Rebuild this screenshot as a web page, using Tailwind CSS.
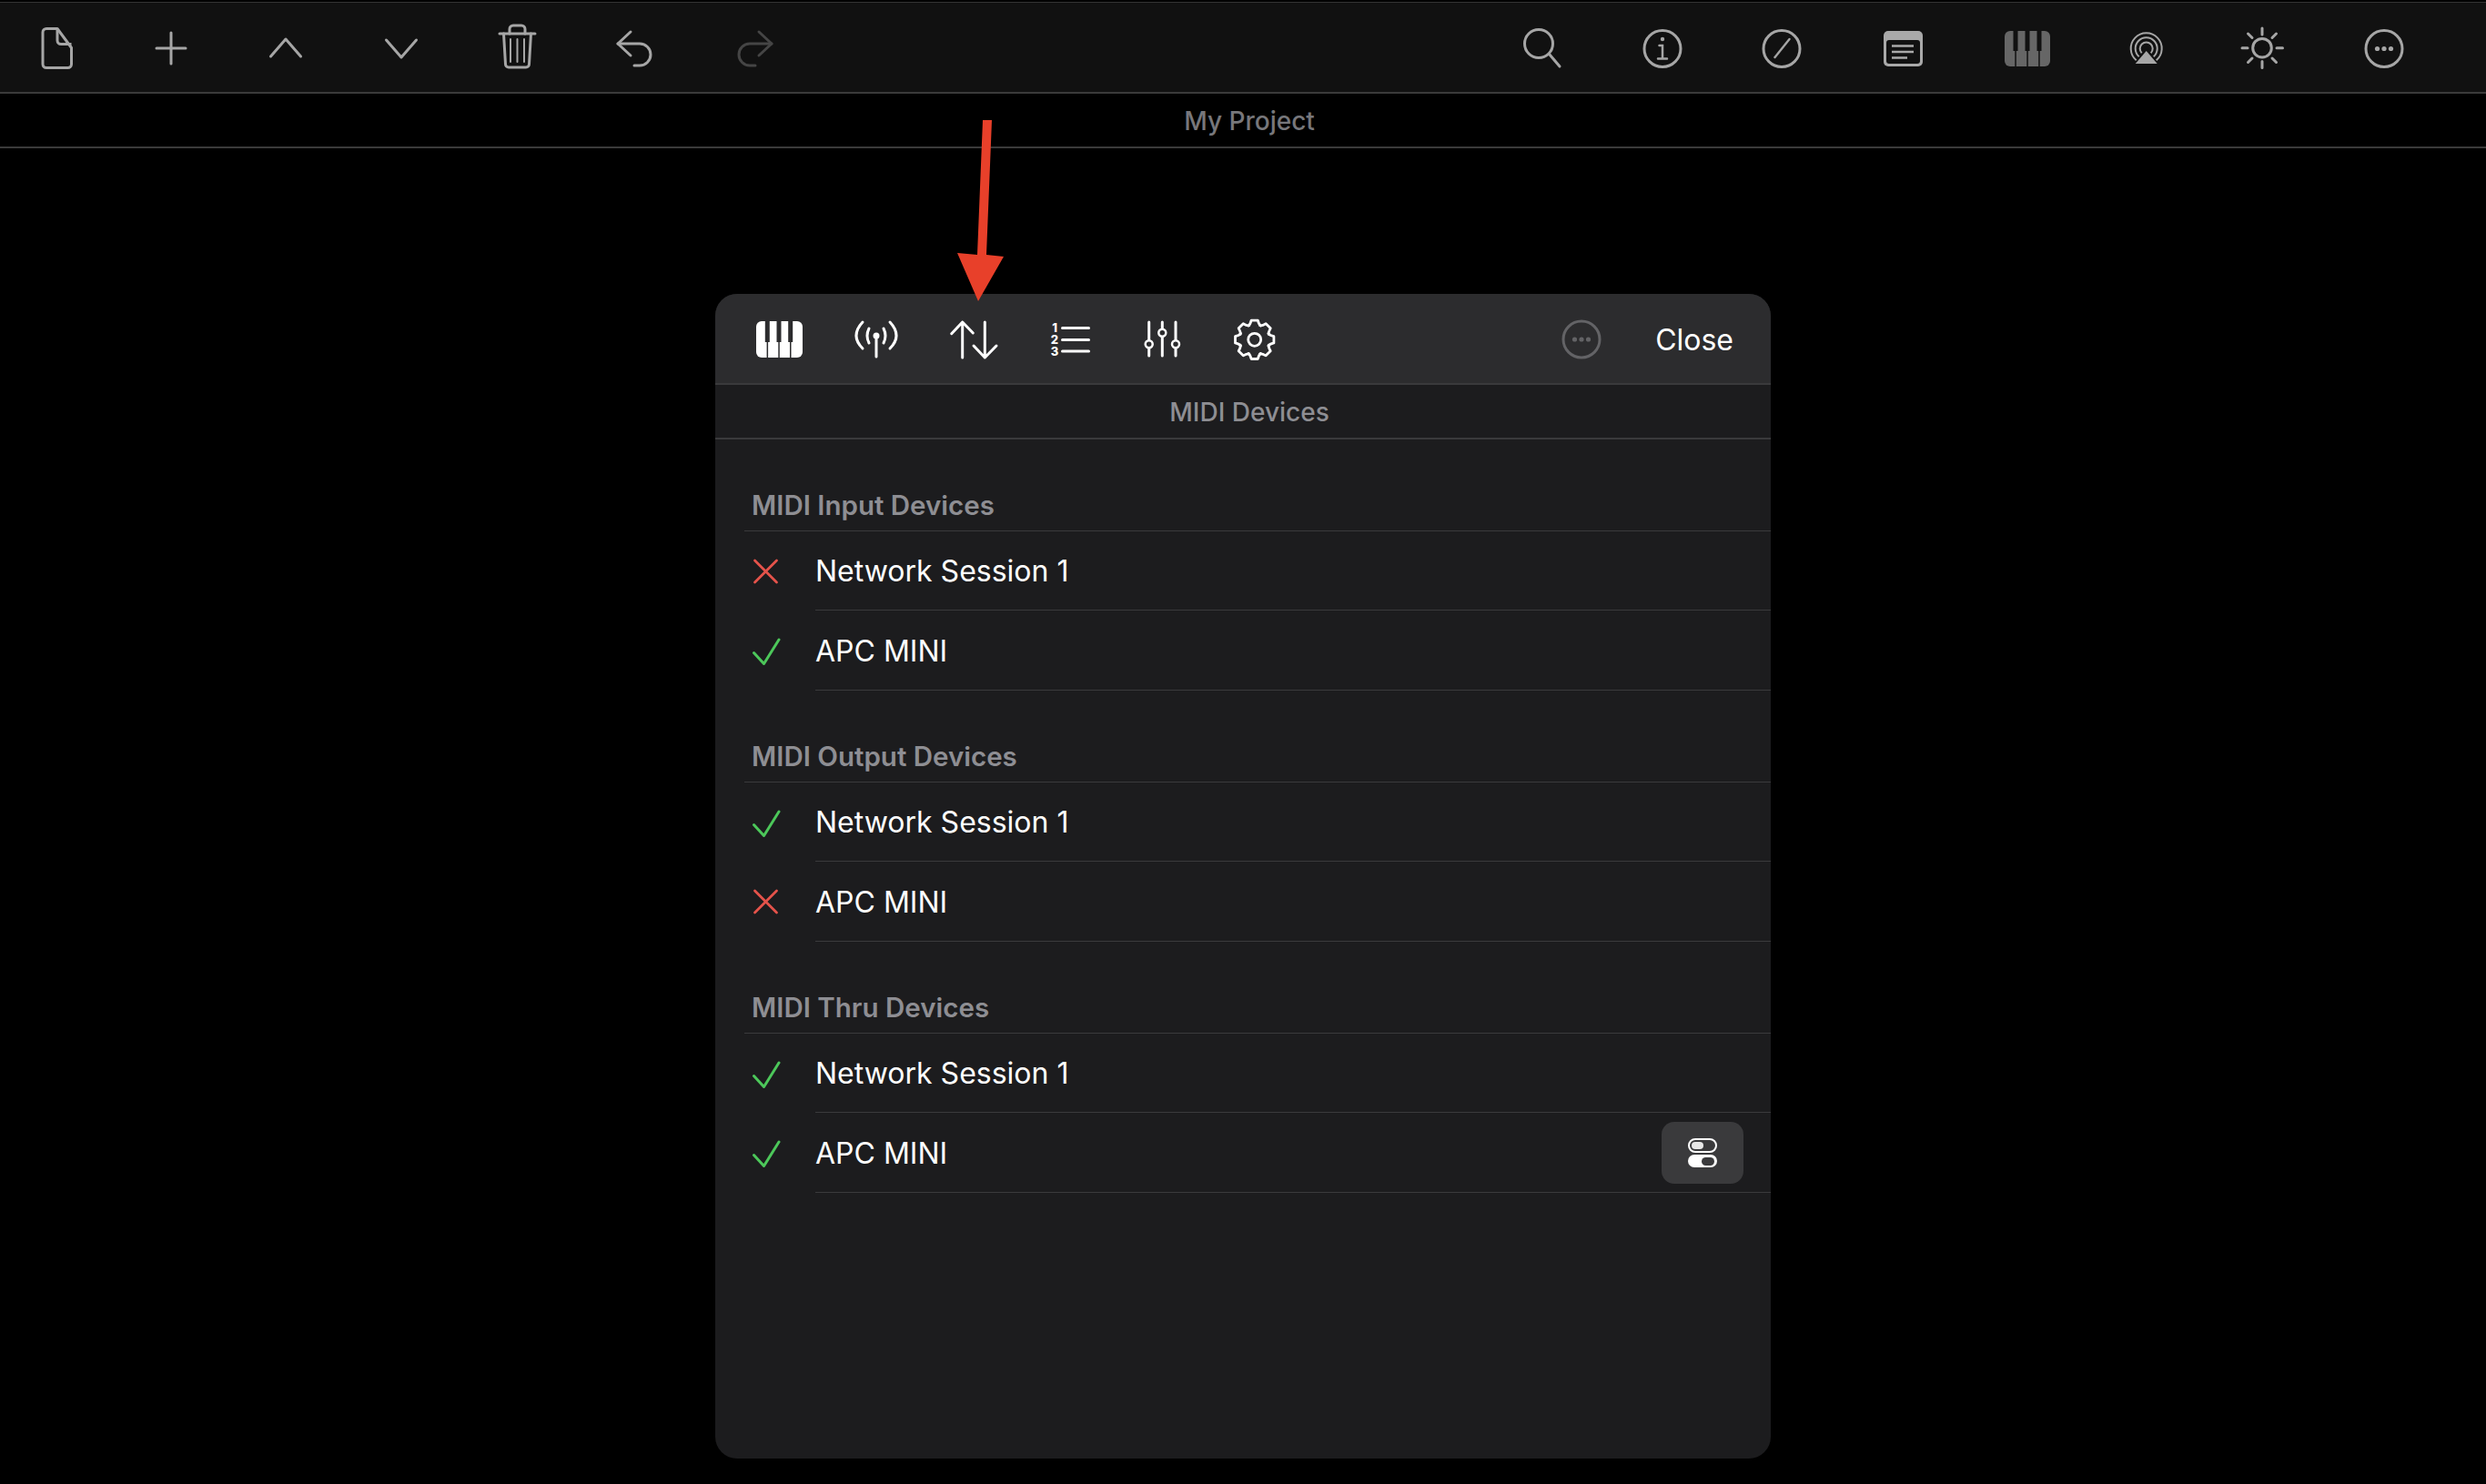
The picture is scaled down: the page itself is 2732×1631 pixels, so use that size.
<!DOCTYPE html>
<html lang="en">
<head>
<meta charset="UTF-8" />
<title>MIDI Devices</title>
<script src="https://cdn.jsdelivr.net/npm/@tailwindcss/browser@4"></script>
</head>
<body class="bg-black [font-family:Inter,sans-serif]">
<div class="relative w-[2732px] h-[1631px] overflow-hidden bg-black">

  <!-- main toolbar -->
  <div class="mt-[2px] h-[101px] flex items-center pb-[1px] bg-[#111111] border-t border-t-[#333333] border-b-2 border-b-[#3a3a3a]">
    <div class="flex items-center ml-[30px] text-[#a6a6a6]">
      <svg class="w-[64px] h-[64px]" viewBox="0 0 64 64" fill="none" stroke="currentColor" stroke-width="3" stroke-linejoin="round"><path d="M21 11.5h12l15.5 21v18a4 4 0 0 1-4 4h-23.5a4 4 0 0 1-4-4v-35a4 4 0 0 1 4-4z"/><path d="M33 11.5v13a4 4 0 0 0 4 4h11.5"/></svg>
      <svg class="w-[64px] h-[64px] ml-[62px]" viewBox="0 0 64 64" fill="none" stroke="currentColor" stroke-width="3" stroke-linecap="round"><path d="M32 16v34M16 33h32"/></svg>
      <svg class="w-[64px] h-[64px] ml-[62px]" viewBox="0 0 64 64" fill="none" stroke="currentColor" stroke-width="3" stroke-linecap="round" stroke-linejoin="round"><path d="M15.5 42L32 23l16.5 19"/></svg>
      <svg class="w-[64px] h-[64px] ml-[63px]" viewBox="0 0 64 64" fill="none" stroke="currentColor" stroke-width="3" stroke-linecap="round" stroke-linejoin="round"><path d="M15.5 24L32 43l16.5-19"/></svg>
      <svg class="w-[64px] h-[64px] ml-[63px]" viewBox="0 0 64 64" fill="none" stroke="currentColor" stroke-width="3" stroke-linecap="round" stroke-linejoin="round"><path d="M13 17h39"/><path d="M24 17v-5a4 4 0 0 1 4-4h9a4 4 0 0 1 4 4v5"/><path d="M17.5 17l2 33.5a3.5 3.5 0 0 0 3.5 3.5h19a3.5 3.5 0 0 0 3.5-3.5l2-33.5"/><path stroke-width="2" d="M25 23v25M32.5 23v25M40 23v25"/></svg>
      <svg class="w-[64px] h-[64px] ml-[66px]" viewBox="0 0 64 64" fill="none" stroke="currentColor" stroke-width="3" stroke-linecap="round" stroke-linejoin="round"><path d="M27 15L13 28l14 13"/><path d="M13 28h24a12 12 0 0 1 0 24h-6"/></svg>
      <svg class="w-[64px] h-[64px] ml-[67px] text-[#454545]" viewBox="0 0 64 64" fill="none" stroke="currentColor" stroke-width="3" stroke-linecap="round" stroke-linejoin="round"><path d="M37 15l14 13-14 13"/><path d="M51 28H27a12 12 0 0 0 0 24h6"/></svg>
    </div>
    <div class="flex items-center ml-auto mr-[80px] text-[#a6a6a6]">
      <svg class="w-[64px] h-[64px]" viewBox="0 0 64 64" fill="none" stroke="currentColor" stroke-width="3" stroke-linecap="round"><circle cx="29" cy="28" r="15.5"/><path d="M41 40l11 13"/></svg>
      <svg class="w-[64px] h-[64px] ml-[69px]" viewBox="0 0 64 64" fill="none" stroke="currentColor" stroke-width="3" stroke-linecap="round"><circle cx="32" cy="33.5" r="20"/><circle cx="32" cy="23" r="2.2" fill="currentColor" stroke="none"/><path stroke-width="2.5" d="M28.5 30h3.5v14.5M27 44.5h10"/></svg>
      <svg class="w-[64px] h-[64px] ml-[67px]" viewBox="0 0 64 64" fill="none" stroke="currentColor" stroke-width="3" stroke-linecap="round"><circle cx="32" cy="33.5" r="20"/><path stroke-width="2.4" d="M24.5 43l16-20"/></svg>
      <svg class="w-[64px] h-[64px] ml-[69px]" viewBox="0 0 64 64" fill="none"><rect x="11" y="14" width="43" height="39" rx="5" fill="#a9a9a9"/><rect x="14" y="24" width="37" height="26" rx="3" fill="#111111"/><path stroke="#a9a9a9" stroke-width="2.5" d="M20 30.5h24M20 37h24M20 43.5h17"/></svg>
      <svg class="w-[64px] h-[64px] ml-[73px]" viewBox="0 0 64 64"><g transform="translate(7 14)"><rect width="50" height="39" rx="6" fill="#666666"/><path fill="#111111" d="M9.5 0h5v22h-5zM22.5 0h5v22h-5zM35.5 0h5v22h-5zM11.3 22h1.5v17h-1.5zM24.3 22h1.5v17h-1.5zM37.2 22h1.5v17h-1.5z"/></g></svg>
      <svg class="w-[64px] h-[64px] ml-[68px]" viewBox="0 0 64 64" fill="none" stroke="currentColor" stroke-width="2"><path d="M19.7 46.3A17 17 0 1 1 41.7 46.3"/><path d="M22.7 42.3A12 12 0 1 1 38.7 42.3"/><path d="M25.7 38.3A7 7 0 1 1 35.7 38.3"/><path fill="currentColor" stroke="none" d="M30.7 36L42.7 50H18.7z"/></svg>
      <svg class="w-[64px] h-[64px] ml-[61px]" viewBox="0 0 64 64" fill="none" stroke="currentColor" stroke-width="3" stroke-linecap="round"><circle cx="33" cy="32.7" r="10.3"/><path d="M33 11v7M33 47.5v7M11 32.7h6M49 32.7h6.5M17.5 17l4.5 4.5M44 44l4.5 4.5M17.5 48.5l4.5-4.5M44 21.5l4.5-4.5"/></svg>
      <svg class="w-[64px] h-[64px] ml-[71px]" viewBox="0 0 64 64" fill="none" stroke="currentColor" stroke-width="3"><circle cx="32" cy="33.5" r="20"/><g fill="currentColor" stroke="none"><circle cx="24.5" cy="33.5" r="2.6"/><circle cx="32" cy="33.5" r="2.6"/><circle cx="39.5" cy="33.5" r="2.6"/></g></svg>
    </div>
  </div>

  <!-- project title -->
  <div class="h-[60px] flex items-center justify-center pl-[14px] pt-[2px] bg-black border-b-2 border-b-[#3a3a3a]">
    <span class="text-[28px] font-medium text-[#77777b]">My Project</span>
  </div>

  <!-- midi panel -->
  <div class="mt-[160px] mx-auto w-[1160px] h-[1280px] rounded-[24px] overflow-hidden bg-[#1c1c1e]">
    <div class="h-[100px] flex items-center pl-[38px] pr-[41px] bg-[#2c2c2e] border-b-2 border-b-[#3a3a3c] text-white">
      <svg class="w-[64px] h-[64px]" viewBox="0 0 64 64"><g transform="translate(7 13)"><rect width="51" height="40" rx="6" fill="#ffffff"/><path fill="#2c2c2e" d="M9.8 0h5v23h-5zM22.5 0h5v23h-5zM35.2 0h5v23h-5zM11.6 23h1.5v17h-1.5zM24.3 23h1.5v17h-1.5zM37 23h1.5v17h-1.5z"/></g></svg>
      <svg class="w-[64px] h-[64px] ml-[43px]" viewBox="0 0 64 64" fill="none" stroke="currentColor" stroke-width="3" stroke-linecap="round"><path d="M17 14Q3 29 17 43M47 14Q61 29 47 43M24 21Q20 29 24 37M40 21Q44 29 40 37M32 30v22"/><circle cx="32" cy="29" r="3.5" fill="currentColor" stroke="none"/></svg>
      <svg class="w-[64px] h-[64px] ml-[43px]" viewBox="0 0 64 64" fill="none" stroke="currentColor" stroke-width="3" stroke-linecap="round" stroke-linejoin="round"><path d="M19.7 14v39M7.7 26.7L19.7 14l11.6 12M44.3 14v39M32 40l12.3 13L57 40"/></svg>
      <svg class="w-[64px] h-[64px] ml-[42px]" viewBox="0 0 64 64" fill="none" stroke="currentColor" stroke-width="3" stroke-linecap="round"><path d="M23.5 20.5h29M23.5 33.5h29M23.5 46h29"/><g fill="currentColor" stroke="none" font-size="13" font-weight="800" text-anchor="middle"><text x="15" y="25">1</text><text x="15" y="38">2</text><text x="15" y="51">3</text></g></svg>
      <svg class="w-[64px] h-[64px] ml-[37px]" viewBox="0 0 64 64" fill="none" stroke="currentColor" stroke-width="3" stroke-linecap="round"><path d="M17.7 14v37M32.3 14v37M47 14v37"/><g fill="#2c2c2e" stroke-width="2.5"><circle cx="17.7" cy="38.3" r="4"/><circle cx="32.3" cy="25.7" r="4"/><circle cx="47" cy="38.3" r="4"/></g></svg>
      <svg class="w-[64px] h-[64px] ml-[38px]" viewBox="0 0 64 64" fill="none" stroke="currentColor" stroke-width="2.8" stroke-linecap="round" stroke-linejoin="round"><g transform="translate(31.7 33.3)"><circle r="7"/><path d="M-6.8-15.2Q-4.8-16.5-3.6-21.2L3.6-21.2Q4.8-16.5 6.8-15.2"/><path transform="rotate(45)" d="M-6.8-15.2Q-4.8-16.5-3.6-21.2L3.6-21.2Q4.8-16.5 6.8-15.2"/><path transform="rotate(90)" d="M-6.8-15.2Q-4.8-16.5-3.6-21.2L3.6-21.2Q4.8-16.5 6.8-15.2"/><path transform="rotate(135)" d="M-6.8-15.2Q-4.8-16.5-3.6-21.2L3.6-21.2Q4.8-16.5 6.8-15.2"/><path transform="rotate(180)" d="M-6.8-15.2Q-4.8-16.5-3.6-21.2L3.6-21.2Q4.8-16.5 6.8-15.2"/><path transform="rotate(225)" d="M-6.8-15.2Q-4.8-16.5-3.6-21.2L3.6-21.2Q4.8-16.5 6.8-15.2"/><path transform="rotate(270)" d="M-6.8-15.2Q-4.8-16.5-3.6-21.2L3.6-21.2Q4.8-16.5 6.8-15.2"/><path transform="rotate(315)" d="M-6.8-15.2Q-4.8-16.5-3.6-21.2L3.6-21.2Q4.8-16.5 6.8-15.2"/></g></svg>
      <svg class="w-[64px] h-[64px] ml-auto mr-[49px]" viewBox="0 0 64 64" fill="none" stroke="#636366" stroke-width="3"><circle cx="32" cy="33" r="20"/><g fill="#636366" stroke="none"><circle cx="24.5" cy="33" r="2.6"/><circle cx="32" cy="33" r="2.6"/><circle cx="39.5" cy="33" r="2.6"/></g></svg>
      <span class="text-[32px] leading-none pt-[3px]">Close</span>
    </div>
    <div class="h-[60px] flex items-center justify-center pl-[14px] pt-[2px] border-b-2 border-b-[#3a3a3c]">
      <span class="text-[28px] font-medium text-[#8e8e93]">MIDI Devices</span>
    </div>

    <!-- input -->
    <div class="h-[101px] ml-[32px] pl-[8px] pb-[10px] flex items-end border-b border-b-[#3a3a3c]"><span class="text-[29.5px] leading-[36px] font-semibold text-[#8e8e93]">MIDI Input Devices</span></div>
    <div class="h-[87px] flex items-center">
      <div class="w-[110px] pl-[40px]"><svg class="w-[32px] h-[32px]" viewBox="0 0 32 32" fill="none" stroke="#e5534b" stroke-width="2.8" stroke-linecap="round"><path d="M3.5 4l24 24M27.5 4l-24 24"/></svg></div>
      <div class="flex-1 h-full flex items-center border-b border-b-[#3a3a3c] text-[32px] text-white"><span class="pt-[1px]">Network Session 1</span></div>
    </div>
    <div class="h-[88px] flex items-center">
      <div class="w-[110px] pl-[40px]"><svg class="w-[32px] h-[32px]" viewBox="0 0 32 32" fill="none" stroke="#4cc75a" stroke-width="3" stroke-linecap="round" stroke-linejoin="round"><path d="M2.5 18.5l11 12L30 4"/></svg></div>
      <div class="flex-1 h-full flex items-center border-b border-b-[#3a3a3c] text-[32px] text-white"><span class="pt-[2px]">APC MINI</span></div>
    </div>

    <!-- output -->
    <div class="h-[101px] ml-[32px] pl-[8px] pb-[10px] flex items-end border-b border-b-[#3a3a3c]"><span class="text-[29.5px] leading-[36px] font-semibold text-[#8e8e93]">MIDI Output Devices</span></div>
    <div class="h-[87px] flex items-center">
      <div class="w-[110px] pl-[40px]"><svg class="w-[32px] h-[32px]" viewBox="0 0 32 32" fill="none" stroke="#4cc75a" stroke-width="3" stroke-linecap="round" stroke-linejoin="round"><path d="M2.5 18.5l11 12L30 4"/></svg></div>
      <div class="flex-1 h-full flex items-center border-b border-b-[#3a3a3c] text-[32px] text-white"><span class="pt-[1px]">Network Session 1</span></div>
    </div>
    <div class="h-[88px] flex items-center">
      <div class="w-[110px] pl-[40px]"><svg class="w-[32px] h-[32px]" viewBox="0 0 32 32" fill="none" stroke="#e5534b" stroke-width="2.8" stroke-linecap="round"><path d="M3.5 4l24 24M27.5 4l-24 24"/></svg></div>
      <div class="flex-1 h-full flex items-center border-b border-b-[#3a3a3c] text-[32px] text-white"><span class="pt-[2px]">APC MINI</span></div>
    </div>

    <!-- thru -->
    <div class="h-[101px] ml-[32px] pl-[8px] pb-[10px] flex items-end border-b border-b-[#3a3a3c]"><span class="text-[29.5px] leading-[36px] font-semibold text-[#8e8e93]">MIDI Thru Devices</span></div>
    <div class="h-[87px] flex items-center">
      <div class="w-[110px] pl-[40px]"><svg class="w-[32px] h-[32px]" viewBox="0 0 32 32" fill="none" stroke="#4cc75a" stroke-width="3" stroke-linecap="round" stroke-linejoin="round"><path d="M2.5 18.5l11 12L30 4"/></svg></div>
      <div class="flex-1 h-full flex items-center border-b border-b-[#3a3a3c] text-[32px] text-white"><span class="pt-[1px]">Network Session 1</span></div>
    </div>
    <div class="h-[88px] flex items-center">
      <div class="w-[110px] pl-[40px]"><svg class="w-[32px] h-[32px]" viewBox="0 0 32 32" fill="none" stroke="#4cc75a" stroke-width="3" stroke-linecap="round" stroke-linejoin="round"><path d="M2.5 18.5l11 12L30 4"/></svg></div>
      <div class="flex-1 h-full flex items-center border-b border-b-[#3a3a3c] text-[32px] text-white">
        <span class="pt-[2px]">APC MINI</span>
        <div class="ml-auto mr-[30px] w-[90px] h-[68px] rounded-[14px] bg-[#3a3a3c] flex items-center justify-center">
          <svg class="w-[32px] h-[32px]" viewBox="0 0 32 32"><rect x="1" y="1" width="30" height="14" rx="7" fill="none" stroke="#ffffff" stroke-width="2"/><rect x="4" y="4" width="13" height="8" rx="4" fill="#e8e8e8"/><rect y="18" width="32" height="14" rx="7" fill="#ffffff"/><rect x="15" y="21" width="14" height="9" rx="4.5" fill="#3a3a3c"/></svg>
        </div>
      </div>
    </div>
  </div>

  <!-- annotation arrow -->
  <svg class="absolute left-[1040px] top-[120px] w-[80px] h-[220px]" viewBox="0 0 80 220"><path fill="#e8402a" d="M40 12h10l-6 148 19 2-28 49-23-53 22 2z"/></svg>
</div>
</body>
</html>
